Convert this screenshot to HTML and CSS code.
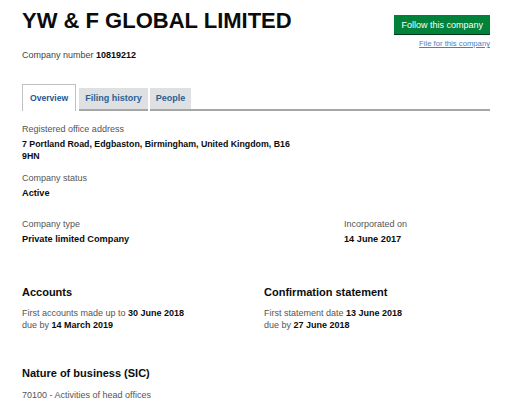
FILE: index.html
```html
<!DOCTYPE html>
<html>
<head>
<meta charset="utf-8">
<link rel="stylesheet" href="styles.css">
</head>
<body>
<div class="page">
  <div class="header">
    <div class="head-left">
      <h1 class="title">YW &amp; F GLOBAL LIMITED</h1>
      <p class="company-number">Company number <strong>10819212</strong></p>
    </div>
    <div class="head-right">
      <a class="follow-btn">Follow this company</a>
      <a class="file-link">File for this company</a>
    </div>
  </div>
  <div class="tabs">
    <span class="tab active">Overview</span>
    <span class="tab">Filing history</span>
    <span class="tab">People</span>
    <span class="tab-rest"></span>
  </div>
  <div class="content">
    <dl class="field">
      <dt>Registered office address</dt>
      <dd class="address">7 Portland Road, Edgbaston, Birmingham, United Kingdom, B16 9HN</dd>
    </dl>
    <dl class="field">
      <dt>Company status</dt>
      <dd>Active</dd>
    </dl>
    <div class="row two-col-type">
      <dl class="field">
        <dt>Company type</dt>
        <dd>Private limited Company</dd>
      </dl>
      <dl class="field">
        <dt>Incorporated on</dt>
        <dd>14 June 2017</dd>
      </dl>
    </div>
    <div class="row two-col">
      <div class="section">
        <h2>Accounts</h2>
        <p>First accounts made up to <strong>30 June 2018</strong><br>due by <strong>14 March 2019</strong></p>
      </div>
      <div class="section">
        <h2>Confirmation statement</h2>
        <p>First statement date <strong>13 June 2018</strong><br>due by <strong>27 June 2018</strong></p>
      </div>
    </div>
    <div class="section">
      <h2>Nature of business (SIC)</h2>
      <p>70100 - Activities of head offices</p>
    </div>
  </div>
</div>
</body>
</html>
```
FILE: styles.css
```css
* { box-sizing: border-box; }
body {
  margin: 0;
  background: #fff;
  font-family: "Liberation Sans", Arial, sans-serif;
  color: #0b0c0c;
}
.page {
  width: 468px;
  margin-left: 22px;
}
.header {
  display: flex;
  justify-content: space-between;
  align-items: flex-start;
}
.title {
  margin: 9px 0 0;
  font-size: 22px;
  font-weight: bold;
  line-height: 24px;
}
.company-number {
  margin: 16px 0 0;
  font-size: 9px;
  line-height: 12px;
  color: #444;
}
.company-number strong { color: #0b0c0c; }
.head-right {
  display: flex;
  flex-direction: column;
  align-items: flex-end;
  margin-top: 15px;
}
.follow-btn {
  display: block;
  background: #00823b;
  color: #fff;
  font-size: 9px;
  line-height: 20px;
  height: 20px;
  padding: 0 7px;
  border-bottom: 1px solid #003618;
}
.file-link {
  margin-top: 4px;
  font-size: 7.7px;
  color: #4c7fbf;
  text-decoration: underline;
}
.tabs {
  display: flex;
  align-items: flex-end;
  margin-top: 23px;
  height: 27px;
}
.tab {
  font-size: 9px;
  font-weight: bold;
  color: #2c5f94;
  background: #dee0e2;
  height: 21px;
  line-height: 21px;
  padding: 0 6px;
  margin-right: 2px;
  margin-bottom: 2px;
  box-shadow: 0 2px 0 #a6a6a6;
}
.tab.active {
  background: #fff;
  color: #1d5796;
  height: 27px;
  line-height: 26px;
  padding: 0 7px;
  font-size: 8.6px;
  border: 1px solid #bfc1c3;
  border-bottom: 0;
  margin-bottom: 0;
  margin-right: 3px;
  box-shadow: none;
}
.tab-rest {
  flex: 1;
  border-bottom: 2px solid #a6a6a6;
  margin-left: -2px;
}
.content { padding-top: 8px; }
dl.field { margin: 0 0 9px; }
dt {
  font-size: 9px;
  line-height: 14px;
  color: #555;
  margin-top: 3px;
}
dd {
  margin: 2px 0 0;
  font-size: 9.2px;
  font-weight: bold;
  line-height: 12px;
}
dd.address { width: 280px; font-size: 8.8px; }
.row { display: flex; }
.two-col-type { margin-top: 15px; }
.two-col-type .field:first-child { width: 322px; flex-shrink: 0; }
.two-col { margin-top: 30px; }
.two-col .section:first-child { width: 242px; flex-shrink: 0; }
.section h2 {
  margin: 0;
  font-size: 11px;
  font-weight: bold;
  line-height: 16px;
}
.section p {
  margin: 7px 0 0;
  font-size: 9px;
  line-height: 12px;
  color: #555;
}
.section p strong { color: #0b0c0c; }
.content > .section { margin-top: 34px; }
.content > .section p { margin-top: 8px; }
```
